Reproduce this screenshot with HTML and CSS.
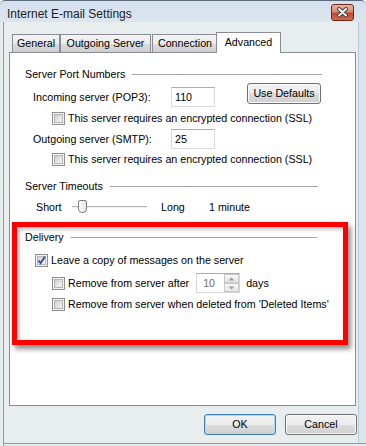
FILE: index.html
```html
<!DOCTYPE html>
<html>
<head>
<meta charset="utf-8">
<link rel="stylesheet" href="styles.css">
</head>
<body>
<div class="window">
  <div class="titlebar">
    <span class="title">Internet E-mail Settings</span>
    <span class="close">
      <svg width="23" height="17" viewBox="0 0 23 17">
        <path d="M8 5 L15 11.5 M15 5 L8 11.5" stroke="#3b3b3b" stroke-width="4" stroke-linecap="round"/>
        <path d="M8 5 L15 11.5 M15 5 L8 11.5" stroke="#ffffff" stroke-width="2" stroke-linecap="round"/>
      </svg>
    </span>
  </div>
  <div class="client">
    <div class="tabs">
      <div class="tab t-general">General</div>
      <div class="tab t-outgoing">Outgoing Server</div>
      <div class="tab t-connection">Connection</div>
      <div class="tab t-advanced selected">Advanced</div>
    </div>
    <div class="panel">
      <div class="grp-head spn"><span>Server Port Numbers</span><span class="rule"></span></div>
      <div class="port-row first">
        <span class="port-label">Incoming server (POP3):</span>
        <span class="textbox">110</span>
        <span class="btn defaults">Use Defaults</span>
      </div>
      <div class="cb-row ssl1"><span class="cb"></span><span class="cb-text">This server requires an encrypted connection (SSL)</span></div>
      <div class="port-row second">
        <span class="port-label">Outgoing server (SMTP):</span>
        <span class="textbox">25</span>
      </div>
      <div class="cb-row ssl2"><span class="cb"></span><span class="cb-text">This server requires an encrypted connection (SSL)</span></div>

      <div class="grp-head st"><span>Server Timeouts</span><span class="rule"></span></div>
      <div class="slider-row">
        <span class="short">Short</span>
        <span class="track"><span class="thumb"></span></span>
        <span class="long">Long</span>
        <span>1 minute</span>
      </div>

      <div class="highlight">
        <div class="grp-head dlv"><span>Delivery</span><span class="rule"></span></div>
        <div class="cb-row leave">
          <span class="cb on"><svg width="11" height="11" viewBox="0 0 11 11"><defs><linearGradient id="g" x1="0" y1="0" x2="1" y2="1"><stop offset="0" stop-color="#d2d2d2"/><stop offset="1" stop-color="#f6f6f6"/></linearGradient></defs><rect x="1.5" y="1.5" width="8" height="8" fill="url(#g)" stroke="#b8b8b8"/><path d="M2.5 5.5 L4.6 8.2 L8.8 1.8" fill="none" stroke="#2a4a9c" stroke-width="1.8"/></svg></span>
          <span class="cb-text">Leave a copy of messages on the server</span>
        </div>
        <div class="cb-row sub after">
          <span class="cb"></span><span class="cb-text">Remove from server after</span>
          <span class="spinner">
            <span class="spin-val">10</span>
            <span class="spin-btns">
              <span class="spin-b"><svg width="7" height="4" viewBox="0 0 7 4"><path d="M0.5 3.5 L3.5 0.5 L6.5 3.5 Z" fill="#a0a0a0"/></svg></span>
              <span class="spin-b"><svg width="7" height="4" viewBox="0 0 7 4"><path d="M0.5 0.5 L3.5 3.5 L6.5 0.5 Z" fill="#a0a0a0"/></svg></span>
            </span>
          </span>
          <span class="days">days</span>
        </div>
        <div class="cb-row sub deleted"><span class="cb"></span><span class="cb-text">Remove from server when deleted from 'Deleted Items'</span></div>
      </div>
    </div>
    <div class="buttons">
      <span class="btn ok">OK</span>
      <span class="btn cancel">Cancel</span>
    </div>
  </div>
</div>
</body>
</html>
```
FILE: styles.css
```css
html, body {
  margin: 0;
  padding: 0;
}
body {
  width: 366px;
  height: 446px;
  overflow: hidden;
  font-family: "Liberation Sans", Arial, sans-serif;
  font-size: 10.7px;
  color: #000;
}
.window {
  width: 366px;
  height: 446px;
  box-sizing: border-box;
  display: flex;
  flex-direction: column;
  background: #e8eded;
  border-top: 1px solid #5c6a78;
  border-radius: 5px 5px 0 0;
  box-shadow: inset 3px 0 0 #e6ecee, inset 4px 0 0 #5fa5d6, inset 0 -2px 0 #e6ecee, inset 0 -3px 0 #5fa5d6, inset -7px 0 0 #dbe6ef, inset -8px 0 0 #b9c9d8;
}
.titlebar {
  height: 21px;
  display: flex;
  align-items: flex-start;
  padding-left: 7px;
  background: linear-gradient(#d4e1ee, #dbe5ef);
  border-radius: 5px 5px 0 0;
}
.title {
  font-size: 12px;
  color: #1c1c1c;
  margin-top: 6px;
  line-height: 14px;
}
.close {
  margin-left: auto;
  margin-right: 12px;
  margin-top: 3px;
  width: 23px;
  height: 17px;
  box-sizing: border-box;
  border: 1px solid #6a2a1e;
  border-radius: 3px;
  background: linear-gradient(#eab3a4 0%, #dc8a74 45%, #c4472c 55%, #d26a4a 100%);
  display: flex;
  align-items: center;
  justify-content: center;
  overflow: hidden;
}
.close svg { display: block; flex: none; }
.client {
  flex: 1;
  display: flex;
  flex-direction: column;
  padding: 10px 10px 0 9px;
}
.tabs {
  display: flex;
  align-items: flex-end;
  height: 20px;
  padding-left: 3px;
  position: relative;
  z-index: 1;
}
.tab {
  height: 18px;
  box-sizing: border-box;
  border: 1px solid #898c95;
  border-bottom: 0;
  background: linear-gradient(#f4f4f4 0%, #ebebeb 50%, #dcdcdc 50%, #cfcfcf 100%);
  text-align: center;
  line-height: 17px;
  white-space: nowrap;
}
.t-general { width: 48px; }
.t-outgoing { width: 91px; }
.t-connection { width: 66px; margin-left: 1px; }
.t-advanced { width: 65px; margin-left: -2px; }
.tab.selected {
  height: 21px;
  margin-bottom: -1px;
  background: #fff;
  line-height: 18px;
  position: relative;
}
.panel {
  flex: 1;
  background: #fff;
  border: 1px solid #898c95;
  display: flex;
  flex-direction: column;
  padding-top: 13px;
}
.grp-head {
  height: 16px;
  display: flex;
  align-items: center;
  white-space: nowrap;
  line-height: 16px;
}
.rule {
  flex: 1;
  height: 0;
  border-top: 1px solid #a6a6a6;
  margin-left: 7px;
  margin-top: 1px;
}
.spn { margin: 0 33px 0 15px; }
.st { margin: 11px 37px 0 15px; }
.dlv { margin: 0 26px 0 8px; }
.port-row {
  height: 20px;
  display: flex;
  align-items: flex-start;
  padding-left: 23px;
}
.port-row.first { margin-top: 5px; }
.port-row.second { margin-top: 3px; }
.port-label {
  width: 138px;
  line-height: 20px;
}
.textbox {
  width: 44px;
  height: 20px;
  box-sizing: border-box;
  border: 1px solid #d8dbe0;
  border-top-color: #abadb3;
  padding-left: 3px;
  line-height: 18px;
}
.btn {
  box-sizing: border-box;
  border: 1px solid #707070;
  border-radius: 3px;
  background: linear-gradient(#f2f2f2 0%, #ebebeb 50%, #dddddd 50%, #cfcfcf 100%);
  box-shadow: inset 0 0 0 1px #fafafa;
  text-align: center;
  display: block;
}
.defaults {
  margin-left: 32px;
  margin-top: -4px;
  width: 74px;
  height: 21px;
  line-height: 19px;
}
.cb-row {
  height: 16px;
  display: flex;
  align-items: center;
  line-height: 16px;
  white-space: nowrap;
}
.ssl1 { margin-top: 3px; padding-left: 42px; }
.ssl2 { margin-top: 2px; padding-left: 42px; }
.cb {
  width: 13px;
  height: 13px;
  box-sizing: border-box;
  border: 1px solid #8f8f8f;
  background: #f4f4f4;
  padding: 1px;
  flex: none;
  display: block;
}
.cb::before {
  content: "";
  display: block;
  width: 100%;
  height: 100%;
  box-sizing: border-box;
  border: 1px solid #b4b4b4;
  background: linear-gradient(135deg, #cdcdcd, #f7f7f7);
}
.cb.on { padding: 0; }
.cb.on::before { display: none; }
.cb.on svg { display: block; }
.cb-text { margin-left: 3px; }
.slider-row {
  height: 16px;
  margin-top: 5px;
  display: flex;
  align-items: center;
  padding-left: 26px;
  white-space: nowrap;
}
.short { width: 36px; }
.track {
  width: 75px;
  height: 14px;
  position: relative;
  display: block;
}
.track::before {
  content: "";
  position: absolute;
  left: 0;
  right: 0;
  top: 6px;
  height: 0;
  border-top: 1px solid #b4b4b4;
  border-bottom: 1px solid #f0f0f0;
}
.thumb {
  position: absolute;
  left: 6px;
  top: 0;
  width: 9px;
  height: 13px;
  box-sizing: border-box;
  border: 1px solid #7d7d7d;
  border-radius: 2px 2px 4px 4px;
  background: linear-gradient(90deg, #fbfbfb, #e4e4e4);
}
.long { margin-left: 14px; width: 48px; }
.highlight {
  margin: 7px 7px 0 2px;
  height: 123px;
  box-sizing: border-box;
  border: 5px solid #ff0000;
  padding-top: 2px;
  display: flex;
  flex-direction: column;
  box-shadow: 3px 4px 5px rgba(0,0,0,0.45), inset 2px 2px 4px rgba(0,0,0,0.3);
}
.leave { margin-top: 7px; padding-left: 18px; }
.leave .cb-text { margin-left: 3px; }
.sub { padding-left: 35px; }
.after { margin-top: 5px; height: 20px; }
.deleted { margin-top: 3px; }
.spinner {
  margin-left: 7px;
  width: 44px;
  height: 20px;
  box-sizing: border-box;
  border: 1px solid #d3d6dc;
  border-top-color: #abadb3;
  display: flex;
}
.spin-val {
  flex: 1;
  color: #6d6d6d;
  padding-left: 6px;
  line-height: 18px;
}
.spin-btns {
  width: 15px;
  display: flex;
  flex-direction: column;
}
.spin-b {
  flex: 1;
  box-sizing: border-box;
  border: 1px solid #c9c9c9;
  background: linear-gradient(#f7f7f7, #e6e6e6);
  display: flex;
  align-items: center;
  justify-content: center;
}
.spin-b svg { display: block; }
.days { margin-left: 6px; }
.buttons {
  display: flex;
  justify-content: flex-end;
  gap: 9px;
  padding: 8px 0 11px;
  margin-right: -1px;
}
.buttons .btn {
  width: 72px;
  height: 21px;
  line-height: 19px;
}
.ok {
  border-color: #3c7fb1;
  box-shadow: inset 0 0 0 1px #a8d8f4;
}
```
